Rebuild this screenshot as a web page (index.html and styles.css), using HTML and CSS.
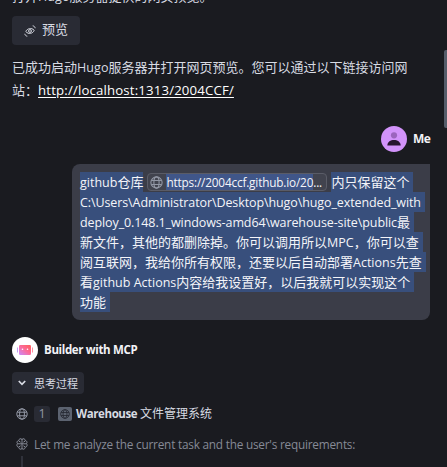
FILE: index.html
```html
<!DOCTYPE html>
<html lang="zh-CN">
<head>
<meta charset="utf-8">
<title>Builder with MCP</title>
<link rel="stylesheet" href="styles.css">
</head>
<body>
<svg width="0" height="0" class="defs">
  <symbol id="globe" viewBox="0 0 12 12"><g fill="none" stroke="currentColor"><circle cx="6" cy="6" r="5.2"/><ellipse cx="6" cy="6" rx="2.4" ry="5.2"/><path d="M1.3 4.2h9.4M1.3 7.8h9.4"/></g></symbol>
</svg>
<main class="chat">
  <p class="reply clipped">打开<span class="en hugo">Hugo</span>服务器提供的网页预览。</p>
  <button class="preview">
    <svg width="12" height="12" viewBox="0 0 12 12" fill="none" stroke="currentColor"><path d="M1.8 6.5C3 3.6 7.6 2.2 10.2 5.3 9 8.6 4.4 9.8 1.8 6.5Z"/><circle cx="6" cy="6" r="1.4"/><path d="M8.7.8c1.4.2 2.2 1 2.5 2.4M3.3 11.2C1.9 11 1.1 10.2.8 8.8"/></svg>
    <span>预览</span>
  </button>
  <p class="reply">已成功启动<span class="en hugo">Hugo</span>服务器并打开网页预览。您可以通过以下链接访问网<br>站：<a class="en link">http://localhost:1313/2004CCF/</a></p>

  <div class="user">
    <svg width="26" height="26" viewBox="0 0 26 26"><circle cx="13" cy="13" r="13" fill="#d293fa"/><circle cx="13" cy="9.3" r="3.1" fill="#9b65bd"/><path d="M6.3 19.5c.2-7.3 13.2-7.3 13.4 0z" fill="#27152f"/></svg>
    <b class="en">Me</b>
  </div>
  <div class="bubble">
    <div class="line"><span class="sel flush"><span class="en github">github</span>仓库</span><span class="chip"><svg width="13" height="13"><use href="#globe"/></svg><span class="en url">https://2004ccf.github.io/20</span><span class="en dots">...</span></span><span class="sel">内只保留这个</span></div>
    <div class="line"><span class="sel"><span class="en path-a">C:\Users\Administrator\Desktop\hugo\hugo_extended_with</span></span></div>
    <div class="line"><span class="sel"><span class="en path-b">deploy_0.148.1_windows-amd64\warehouse-site\public</span>最</span></div>
    <div class="line"><span class="sel">新文件，其他的都删除掉。你可以调用所以<span class="en">MPC</span>，你可以查</span></div>
    <div class="line"><span class="sel">阅互联网，我给你所有权限，还要以后自动部署<span class="en">Actions</span>先查</span></div>
    <div class="line"><span class="sel">看<span class="en">github Actions</span>内容给我设置好，以后我就可以实现这个</span></div>
    <div class="line"><span class="sel">功能</span></div>
  </div>

  <div class="builder">
    <svg width="26" height="26" viewBox="0 0 26 26"><defs><linearGradient id="bot" x1="1" y1="0" x2="0" y2="1"><stop stop-color="#ff5c55"/><stop offset=".5" stop-color="#fb6c9c"/><stop offset="1" stop-color="#c78cff"/></linearGradient></defs><circle cx="13" cy="13" r="13" fill="#fff"/><rect x="7" y="8" width="12" height="10" rx="1.2" fill="url(#bot)"/><path d="M5.500 10.500v5" stroke="#c2a0f5"/><path d="M20.500 10.500v5" stroke="#ff8d9d"/><circle cx="10.500" cy="12.300" r=".8" fill="#fff"/><circle cx="15.500" cy="12.300" r=".8" fill="#fff"/></svg>
    <b class="en">Builder with MCP</b>
  </div>
  <button class="thinking">
    <svg width="8" height="6" viewBox="0 0 8 6" fill="none" stroke="currentColor" stroke-width="1.7"><path d="M.8 1 4 4.300 7.200 1"/></svg>
    <span>思考过程</span>
  </button>
  <div class="source">
    <svg width="12" height="12"><use href="#globe"/></svg>
    <span class="count en">1</span>
    <span class="site"><svg width="10" height="10"><use href="#globe"/></svg></span>
    <span class="title"><b class="en">Warehouse</b> 文件管理系统</span>
  </div>
  <div class="thought">
    <div class="rail">
      <svg width="12" height="12" viewBox="0 0 12 12" fill="none" stroke="currentColor"><path d="M6 1v10M6 1.500C4.800 0 2.800.8 2.900 2.500 1 2.700.5 4.600 1.500 5.700.2 7 1 9 2.700 9.200 2.900 11.300 5 11.900 6 10.500 7 11.900 9.100 11.300 9.300 9.200 11 9 11.800 7 10.500 5.700 11.500 4.600 11 2.700 9.100 2.500 9.200.8 7.200 0 6 1.500M1.500 5.800h9M3 3.200l1.600 1M9 3.200l-1.600 1M3 8.800l1.600-1M9 8.800l-1.600-1"/></svg>
      <i></i>
    </div>
    <span class="en">Let me analyze the current task and the user's requirements:</span>
  </div>
</main>
<div class="scrollbar"></div>
</body>
</html>
```
FILE: styles.css
```css
* { box-sizing: border-box; }
body {
  margin: 0;
  height: 467px;
  overflow: hidden;
  background: #1a1b20;
  color: #d8dbe3;
  font: 13px/22px "Noto Sans CJK SC", sans-serif;
}
.defs { position: absolute; }
svg { display: block; flex: none; }
.en { font-family: "Open Sans", "Noto Sans CJK SC", sans-serif; font-size: 12.5px; }
b.en { font-size: 12px; font-weight: 700; }
.chat { display: flex; flex-direction: column; align-items: flex-start; padding: 0 17px 0 12px; }
p { margin: 0; white-space: nowrap; }
.clipped { margin-top: -15px; }
button {
  display: flex;
  align-items: center;
  border: 0;
  border-radius: 4px;
  background: #292b34;
  color: #d8dbe3;
  font: inherit;
}
.preview { margin: 8px 0 11px; width: 68px; height: 29px; padding: 0 12px; gap: 6px; line-height: 20px; }
.preview span { margin-top: -4px; }
.hugo { letter-spacing: 0.1px; }
.en.link { color: #fff; font-size: 13.2px; line-height: 20px; letter-spacing: 0.17px; text-decoration: underline; text-underline-offset: 2px; }
.user { display: flex; align-items: center; align-self: flex-end; gap: 6px; height: 26px; margin-top: 25px; color: #f2f3f7; }
.user b { width: 17px; letter-spacing: -0.6px; }
.bubble {
  align-self: flex-end;
  width: 358px;
  height: 156px;
  margin-top: 12px;
  padding: 8px;
  border-radius: 8px 0 8px 8px;
  background: #3b3d48;
  color: #f4f5f9;
  line-height: 20px;
}
.line { display: flex; align-items: center; height: 20px; white-space: nowrap; }
.line > * { flex: none; }
.sel { height: 20px; padding-right: 4px; background: #384f7c; }
.flush { padding-right: 0; }
.path-a { letter-spacing: -0.1px; }
.path-b { letter-spacing: -0.1px; }
.chip {
  display: flex;
  align-items: center;
  width: 180px;
  height: 18px;
  margin: 0 4px;
  padding-left: 2px;
  border: 1px solid #5a5c67;
  border-radius: 4px;
  background: #41434e;
  line-height: 16px;
}
.chip svg { color: #9297a5; margin-right: 3px; }
.chip .en { font-size: 11.8px; letter-spacing: -0.18px; }
.url { background: #405689; }
.builder { display: flex; align-items: center; gap: 6px; height: 26px; margin-top: 17px; color: #f2f3f7; }
.builder b { font-size: 11.5px; letter-spacing: -0.35px; }
.thinking { width: 72px; height: 22px; margin-top: 9px; padding: 0 6px; gap: 8px; font-size: 11px; line-height: 20px; }
.thinking span { margin-top: -1px; }
.source { display: flex; align-items: center; height: 16px; margin-top: 12px; padding-left: 4px; color: #9398a5; }
.count { width: 16px; height: 16px; margin: 0 8px 0 6px; border-radius: 3px; background: #292b34; line-height: 16px; text-align: center; }
.site { display: grid; place-items: center; width: 14px; height: 14px; margin-right: 4px; border-radius: 2px; background: #5c6370; color: #252831; }
.title { color: #d8dbe3; font-size: 12px; margin-top: -2px; }
.title b.en { font-size: 11.5px; letter-spacing: -0.4px; }
.thought { display: flex; align-items: flex-start; margin-top: 11px; padding-left: 4px; gap: 6px; color: #868a96; }
.thought .en { font-size: 11.8px; letter-spacing: -0.22px; }
.rail { display: flex; flex-direction: column; align-items: center; padding-top: 5px; gap: 6px; color: #868a96; }
.rail i { width: 2px; height: 20px; background: #30323b; }
.scrollbar { position: absolute; top: 50px; right: 0; width: 3px; height: 78px; border-radius: 2px 0 0 2px; background: #555d6a; }
```
